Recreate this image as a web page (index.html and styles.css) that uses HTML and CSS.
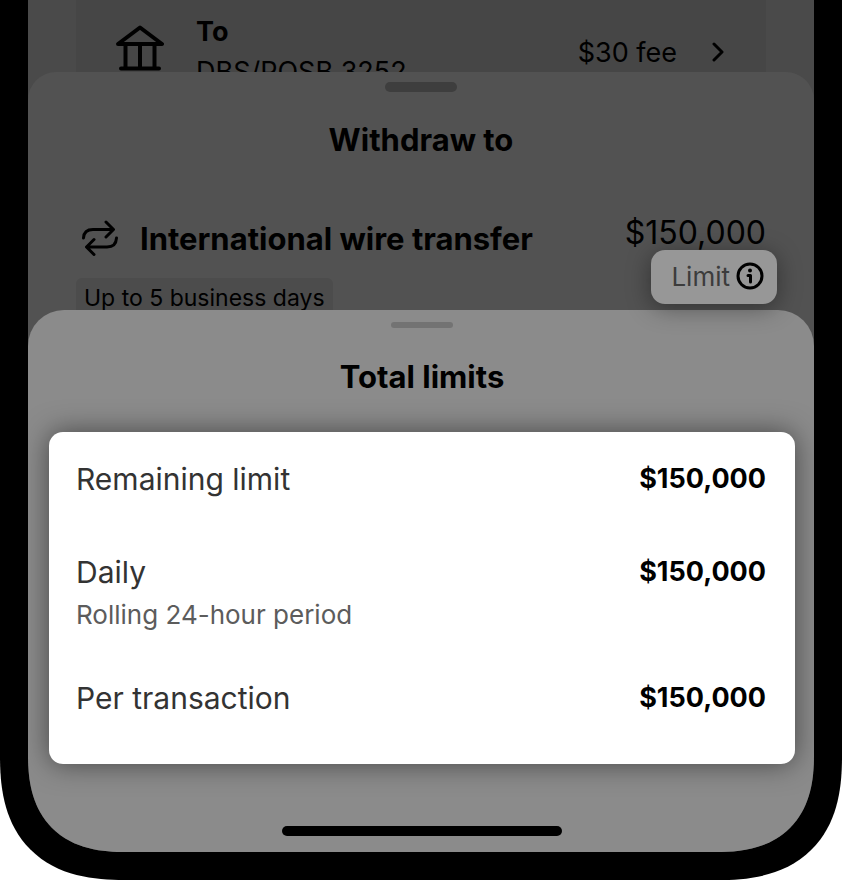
FILE: index.html
```html
<!DOCTYPE html>
<html lang="en">
<head>
    <meta charset="UTF-8">
    <meta name="viewport" content="width=device-width, initial-scale=1.0">
    <title>Total limits</title>
    <link rel="stylesheet" href="styles.css">
</head>
<body>
    <div class="phone">
        <div class="screen">

            <!-- Withdrawal page at the back -->
            <main class="page">
                <button class="account" type="button">
                    <svg class="bank-icon" viewBox="0 0 48 46" width="48" height="46" aria-hidden="true">
                        <path d="M2 19 L24 2.500 L46 19 Z M9.500 20 V43 M24 20 V43 M38.500 20 V43 M5 43.500 H43" />
                    </svg>
                    <span class="account-name">
                        <strong>To</strong>
                        <span>DBS/POSB 3252</span>
                    </span>
                    <span class="fee">$30 fee</span>
                    <svg class="chevron" viewBox="0 0 12 20" width="12" height="20" aria-hidden="true">
                        <path d="M2 2 L10 10 L2 18" />
                    </svg>
                </button>
            </main>

            <!-- Withdraw to sheet -->
            <section class="sheet withdraw">
                <div class="handle"></div>
                <h2>Withdraw to</h2>
                <div class="method">
                    <div class="method-info">
                        <div class="method-title">
                            <svg class="swap-icon" viewBox="0 0 36 36" width="36" height="36" aria-hidden="true">
                                <path d="M1.500 18 Q2 9.500 11 9.500 H31 M24 2 L31.500 9.500 L24 17 M34.500 18 Q34 27 25 27 H5 M12 19.500 L4.500 27 L12 34.500" />
                            </svg>
                            <h3>International wire transfer</h3>
                        </div>
                        <span class="tag">Up to 5 business days</span>
                    </div>
                    <div class="method-limit">
                        <span class="amount">$150,000</span>
                        <button class="limit-button" type="button">
                            Limit
                            <svg class="info-icon" viewBox="0 0 28 28" width="28" height="28" aria-hidden="true">
                                <circle cx="14" cy="14" r="12" />
                                <path d="M12 13.500 H14.500 V20" />
                                <circle class="dot" cx="14" cy="8.500" r="2" />
                            </svg>
                        </button>
                    </div>
                </div>
            </section>

            <!-- Total limits sheet -->
            <section class="sheet limits">
                <div class="handle"></div>
                <h2>Total limits</h2>
                <dl class="limit-list">
                    <div class="limit-row">
                        <dt>Remaining limit</dt>
                        <dd>$150,000</dd>
                    </div>
                    <div class="limit-row">
                        <dt>Daily <small>Rolling 24-hour period</small></dt>
                        <dd>$150,000</dd>
                    </div>
                    <div class="limit-row">
                        <dt>Per transaction</dt>
                        <dd>$150,000</dd>
                    </div>
                </dl>
                <div class="home-bar"></div>
            </section>

        </div>
    </div>
</body>
</html>
```

FILE: styles.css
```css
* {
    box-sizing: border-box;
}
body {
    margin: 0;
    background-color: white;
    font-family: Inter, "Liberation Sans", sans-serif;
    color: black;
}
h2, h3, dl, dd {
    margin: 0;
}
button {
    border: none;
    font-family: inherit;
    color: inherit;
    cursor: pointer;
}
svg {
    flex: none;
    fill: none;
    stroke: black;
    stroke-width: 3;
    stroke-linecap: round;
    stroke-linejoin: round;
}
.phone {
    background-color: black;
    padding: 0 28px 28px;
    border-radius: 0 0 124px 124px;
    corner-shape: superellipse(1.3);
}
.screen {
    background-color: #4a4a4a;
    border-radius: 0 0 98px 98px;
    corner-shape: superellipse(1.3);
    overflow: hidden;
}

/* page */
.page {
    padding: 0 48px;
}
.account {
    display: flex;
    align-items: center;
    width: 100%;
    padding: 12px 42px 12px 40px;
    background-color: #464646;
    text-align: left;
}
.bank-icon {
    align-self: flex-start;
    margin-top: 13px;
    stroke-width: 4;
}
.account-name {
    display: flex;
    flex-direction: column;
    flex: 1;
    margin-left: 32px;
    font-size: 27px;
    line-height: 40px;
}
.account-name strong {
    font-weight: 700;
}
.fee {
    margin-right: 35px;
    font-size: 27px;
}

/* sheets */
.sheet {
    position: relative;
}
.sheet h2 {
    font-size: 31px;
    font-weight: 700;
    line-height: 40px;
    text-align: center;
}
.handle {
    margin: 0 auto;
    border-radius: 5px;
}
.withdraw {
    margin-top: -32px;
    padding: 10px 48px 40px;
    background-color: #525252;
    border-radius: 28px 28px 0 0;
}
.withdraw .handle {
    width: 72px;
    height: 10px;
    margin-bottom: 28px;
    background-color: #3e3e3e;
}
.method {
    display: flex;
    justify-content: space-between;
    margin-top: 46px;
}
.method-title {
    display: flex;
    align-items: center;
    gap: 22px;
    height: 64px;
    padding-left: 6px;
}
.method-title h3 {
    font-size: 31px;
    font-weight: 700;
}
.tag {
    display: inline-block;
    margin-top: 8px;
    padding: 0 8px;
    background-color: #4c4c4c;
    border-radius: 6px;
    font-size: 23px;
    line-height: 40px;
}
.method-limit {
    display: flex;
    flex-direction: column;
    align-items: flex-end;
    padding-top: 10px;
}
.amount {
    font-size: 32px;
    line-height: 34px;
}
.limit-button {
    position: relative;
    z-index: 2;
    display: flex;
    align-items: center;
    gap: 6px;
    height: 54px;
    margin-right: -11px;
    padding: 0 13px 2px 20px;
    background-color: #979797;
    border-radius: 14px;
    box-shadow: 0 4px 24px rgba(0, 0, 0, 0.4);
    color: #3c3c3c;
    font-size: 26px;
}
.info-icon .dot {
    fill: black;
    stroke: none;
}
.limits {
    margin-top: -48px;
    padding: 12px 19px 16px 21px;
    background-color: #8b8b8b;
    border-radius: 36px 36px 0 0;
}
.limits .handle {
    width: 62px;
    height: 6px;
    margin-bottom: 29px;
    background-color: #737373;
}
.limit-list {
    display: flex;
    flex-direction: column;
    gap: 40px;
    margin-top: 35px;
    padding: 27px 29px 33px 27px;
    background-color: white;
    border-radius: 14px;
    box-shadow: 0 0 28px rgba(0, 0, 0, 0.5);
}
.limit-row {
    display: flex;
    justify-content: space-between;
    min-height: 53px;
    line-height: 40px;
}
.limit-row dt {
    color: #333;
    font-size: 30px;
}
.limit-row small {
    display: block;
    color: #5c5c5c;
    font-size: 26px;
    line-height: 46px;
}
.limit-row dd {
    font-size: 27px;
    font-weight: 700;
}
.home-bar {
    width: 280px;
    height: 10px;
    margin: 62px auto 0;
    background-color: black;
    border-radius: 5px;
}
```
